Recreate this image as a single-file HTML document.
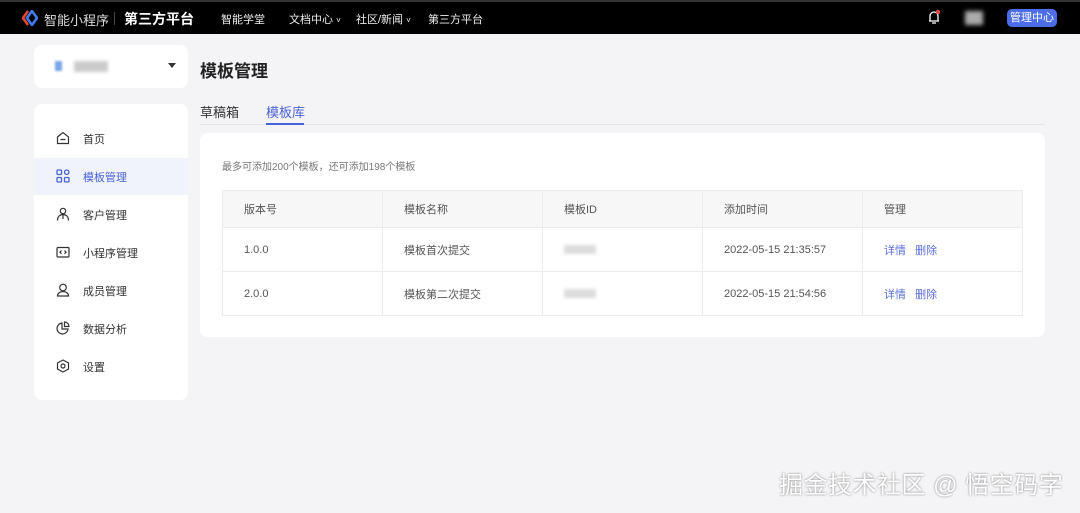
<!DOCTYPE html>
<html><head><meta charset="utf-8"><style>
*{margin:0;padding:0;box-sizing:border-box}
body{width:1080px;height:513px;background:#f4f4f6;font-family:"Liberation Sans","Noto Sans CJK SC",sans-serif;position:relative;overflow:hidden;color:#333}
.top{position:absolute;left:0;top:0;width:1080px;height:34px;background:#000;border-top:2px solid #333}
.a{position:absolute;white-space:nowrap}
.card{position:absolute;background:#fff;border-radius:8px}
.mi{position:absolute;left:34px;width:154px;height:37px;font-size:11px;color:#333}
.mi span{position:absolute;left:49px;top:11px}
.mi svg{position:absolute;left:22px;top:11px}
table{position:absolute;left:222px;top:190px;border-collapse:collapse;font-size:11px;color:#555}
td{width:160px;border:1px solid #ebebeb;padding-left:21px;height:44px}
tr.h td{background:#f7f7f7;height:37px}
.bl{display:inline-block;width:32px;height:9px;background:#ddd;filter:blur(1.5px);vertical-align:middle}
.lk{color:#5b6ed9}
</style></head><body>
<div class="top">
<svg class="a" style="left:22px;top:8px" width="16" height="16" viewBox="0 0 16 16"><path d="M6 1L1 8l5 7" stroke="#e8452e" stroke-width="2.6" fill="none"/><path d="M10 1l5 7-5 7-5-7z" fill="none" stroke="#3f7cf0" stroke-width="2.6"/></svg>
<div class="a" style="left:44px;top:8px;font-size:13px;color:#ddd">智能小程序</div>
<div class="a" style="left:114px;top:10px;width:1px;height:13px;background:#444"></div>
<div class="a" style="left:124px;top:7px;font-size:14px;color:#fff;font-weight:bold">第三方平台</div>
<div class="a" style="left:221px;top:9px;font-size:11px;color:#eee">智能学堂</div>
<div class="a" style="left:289px;top:9px;font-size:11px;color:#eee">文档中心 <span style="font-size:8px">˅</span></div>
<div class="a" style="left:356px;top:9px;font-size:11px;color:#eee">社区/新闻 <span style="font-size:8px">˅</span></div>
<div class="a" style="left:428px;top:9px;font-size:11px;color:#eee">第三方平台</div>
<svg class="a" style="left:927px;top:7px" width="14" height="16" viewBox="0 0 14 16"><path d="M3 12V7a4 4 0 0 1 8 0v5M2 12h10M5 14h4" stroke="#fff" stroke-width="1.3" fill="none"/><circle cx="11" cy="3" r="2.2" fill="#e54545"/></svg>
<div class="a" style="left:965px;top:9px;width:18px;height:14px;background:#aaa;filter:blur(2px)"></div>
<div class="a" style="left:1007px;top:7px;width:50px;height:18px;background:#4b6de8;border-radius:5px;color:#fff;font-size:11px;text-align:center;line-height:18px">管理中心</div>
</div>
<div class="card" style="left:34px;top:45px;width:154px;height:43px"></div>
<div class="a" style="left:55px;top:61px;width:7px;height:10px;background:#7aa6ea;filter:blur(1px)"></div>
<div class="a" style="left:74px;top:61px;width:34px;height:11px;background:#ccc;filter:blur(1.5px)"></div>
<div class="a" style="left:168px;top:63px;border:4px solid transparent;border-top:5px solid #333"></div>
<div class="card" style="left:34px;top:104px;width:154px;height:296px"></div>
<div class="mi" style="top:120px"><svg width="14" height="14" viewBox="0 0 14 14" fill="none" stroke="#333" stroke-width="1.2"><path d="M1.5 6L7 1.5 12.5 6v6.5h-11zM4.5 8.5h5"/></svg><span>首页</span></div>
<div class="mi" style="top:158px;background:#f0f3fc;color:#4b63d8"><svg width="14" height="14" viewBox="0 0 14 14" fill="none" stroke="#4b63d8" stroke-width="1.3"><rect x="1" y="1" width="4.5" height="4.5" rx="1"/><rect x="1" y="8.5" width="4.5" height="4.5" rx="1"/><rect x="8.5" y="8.5" width="4.5" height="4.5" rx="1"/><circle cx="10.7" cy="3.2" r="2.2"/></svg><span>模板管理</span></div>
<div class="mi" style="top:196px"><svg width="14" height="14" viewBox="0 0 14 14" fill="none" stroke="#333" stroke-width="1.2"><circle cx="7" cy="4" r="2.7"/><path d="M1.5 13.5c0-4 2.5-6 5.5-6s5.5 2 5.5 6M7 8v4"/></svg><span>客户管理</span></div>
<div class="mi" style="top:234px"><svg width="14" height="14" viewBox="0 0 14 14" fill="none" stroke="#333" stroke-width="1.2"><rect x="1" y="2.5" width="12" height="9.5" rx="1"/><path d="M5.5 5.5L4 7.2l1.5 1.6M8.5 5.5L10 7.2 8.5 8.8"/></svg><span>小程序管理</span></div>
<div class="mi" style="top:272px"><svg width="14" height="14" viewBox="0 0 14 14" fill="none" stroke="#333" stroke-width="1.2"><circle cx="7" cy="4.5" r="3.3"/><path d="M1.5 13h11c0-2.7-2.5-4.5-5.5-4.5S1.5 10.3 1.5 13z"/></svg><span>成员管理</span></div>
<div class="mi" style="top:310px"><svg width="14" height="14" viewBox="0 0 14 14" fill="none" stroke="#333" stroke-width="1.2"><path d="M6 2a5.5 5.5 0 1 0 6 6H6zM8.5 1v4.5H13A4.5 4.5 0 0 0 8.5 1z"/></svg><span>数据分析</span></div>
<div class="mi" style="top:348px"><svg width="14" height="14" viewBox="0 0 14 14" fill="none" stroke="#333" stroke-width="1.2"><path d="M7 1l5.5 3v6L7 13 1.5 10V4z"/><circle cx="7" cy="7" r="2"/></svg><span>设置</span></div>
<div class="a" style="left:200px;top:57px;font-size:17px;font-weight:bold;color:#222">模板管理</div>
<div class="a" style="left:200px;top:102px;font-size:13px;color:#333">草稿箱</div>
<div class="a" style="left:266px;top:102px;font-size:13px;color:#4b63d8">模板库</div>
<div class="a" style="left:200px;top:124px;width:845px;height:1px;background:#e3e3e3"></div>
<div class="a" style="left:266px;top:123px;width:38px;height:2px;background:#4b63d8"></div>
<div class="card" style="left:200px;top:133px;width:845px;height:204px"></div>
<div class="a" style="left:222px;top:158px;font-size:10px;color:#777">最多可添加200个模板，还可添加198个模板</div>
<table>
<tr class="h"><td>版本号</td><td>模板名称</td><td>模板ID</td><td>添加时间</td><td>管理</td></tr>
<tr><td>1.0.0</td><td>模板首次提交</td><td><span class="bl"></span></td><td>2022-05-15 21:35:57</td><td><span class="lk">详情</span>&nbsp;&nbsp; <span class="lk">删除</span></td></tr>
<tr><td>2.0.0</td><td>模板第二次提交</td><td><span class="bl"></span></td><td>2022-05-15 21:54:56</td><td><span class="lk">详情</span>&nbsp;&nbsp; <span class="lk">删除</span></td></tr>
</table>
<div class="a" style="left:779px;top:465px;font-size:24px;letter-spacing:0.5px;color:#fff;text-shadow:0 0 2px rgba(0,0,0,.5)">掘金技术社区 @ 悟空码字</div>
</body></html>
